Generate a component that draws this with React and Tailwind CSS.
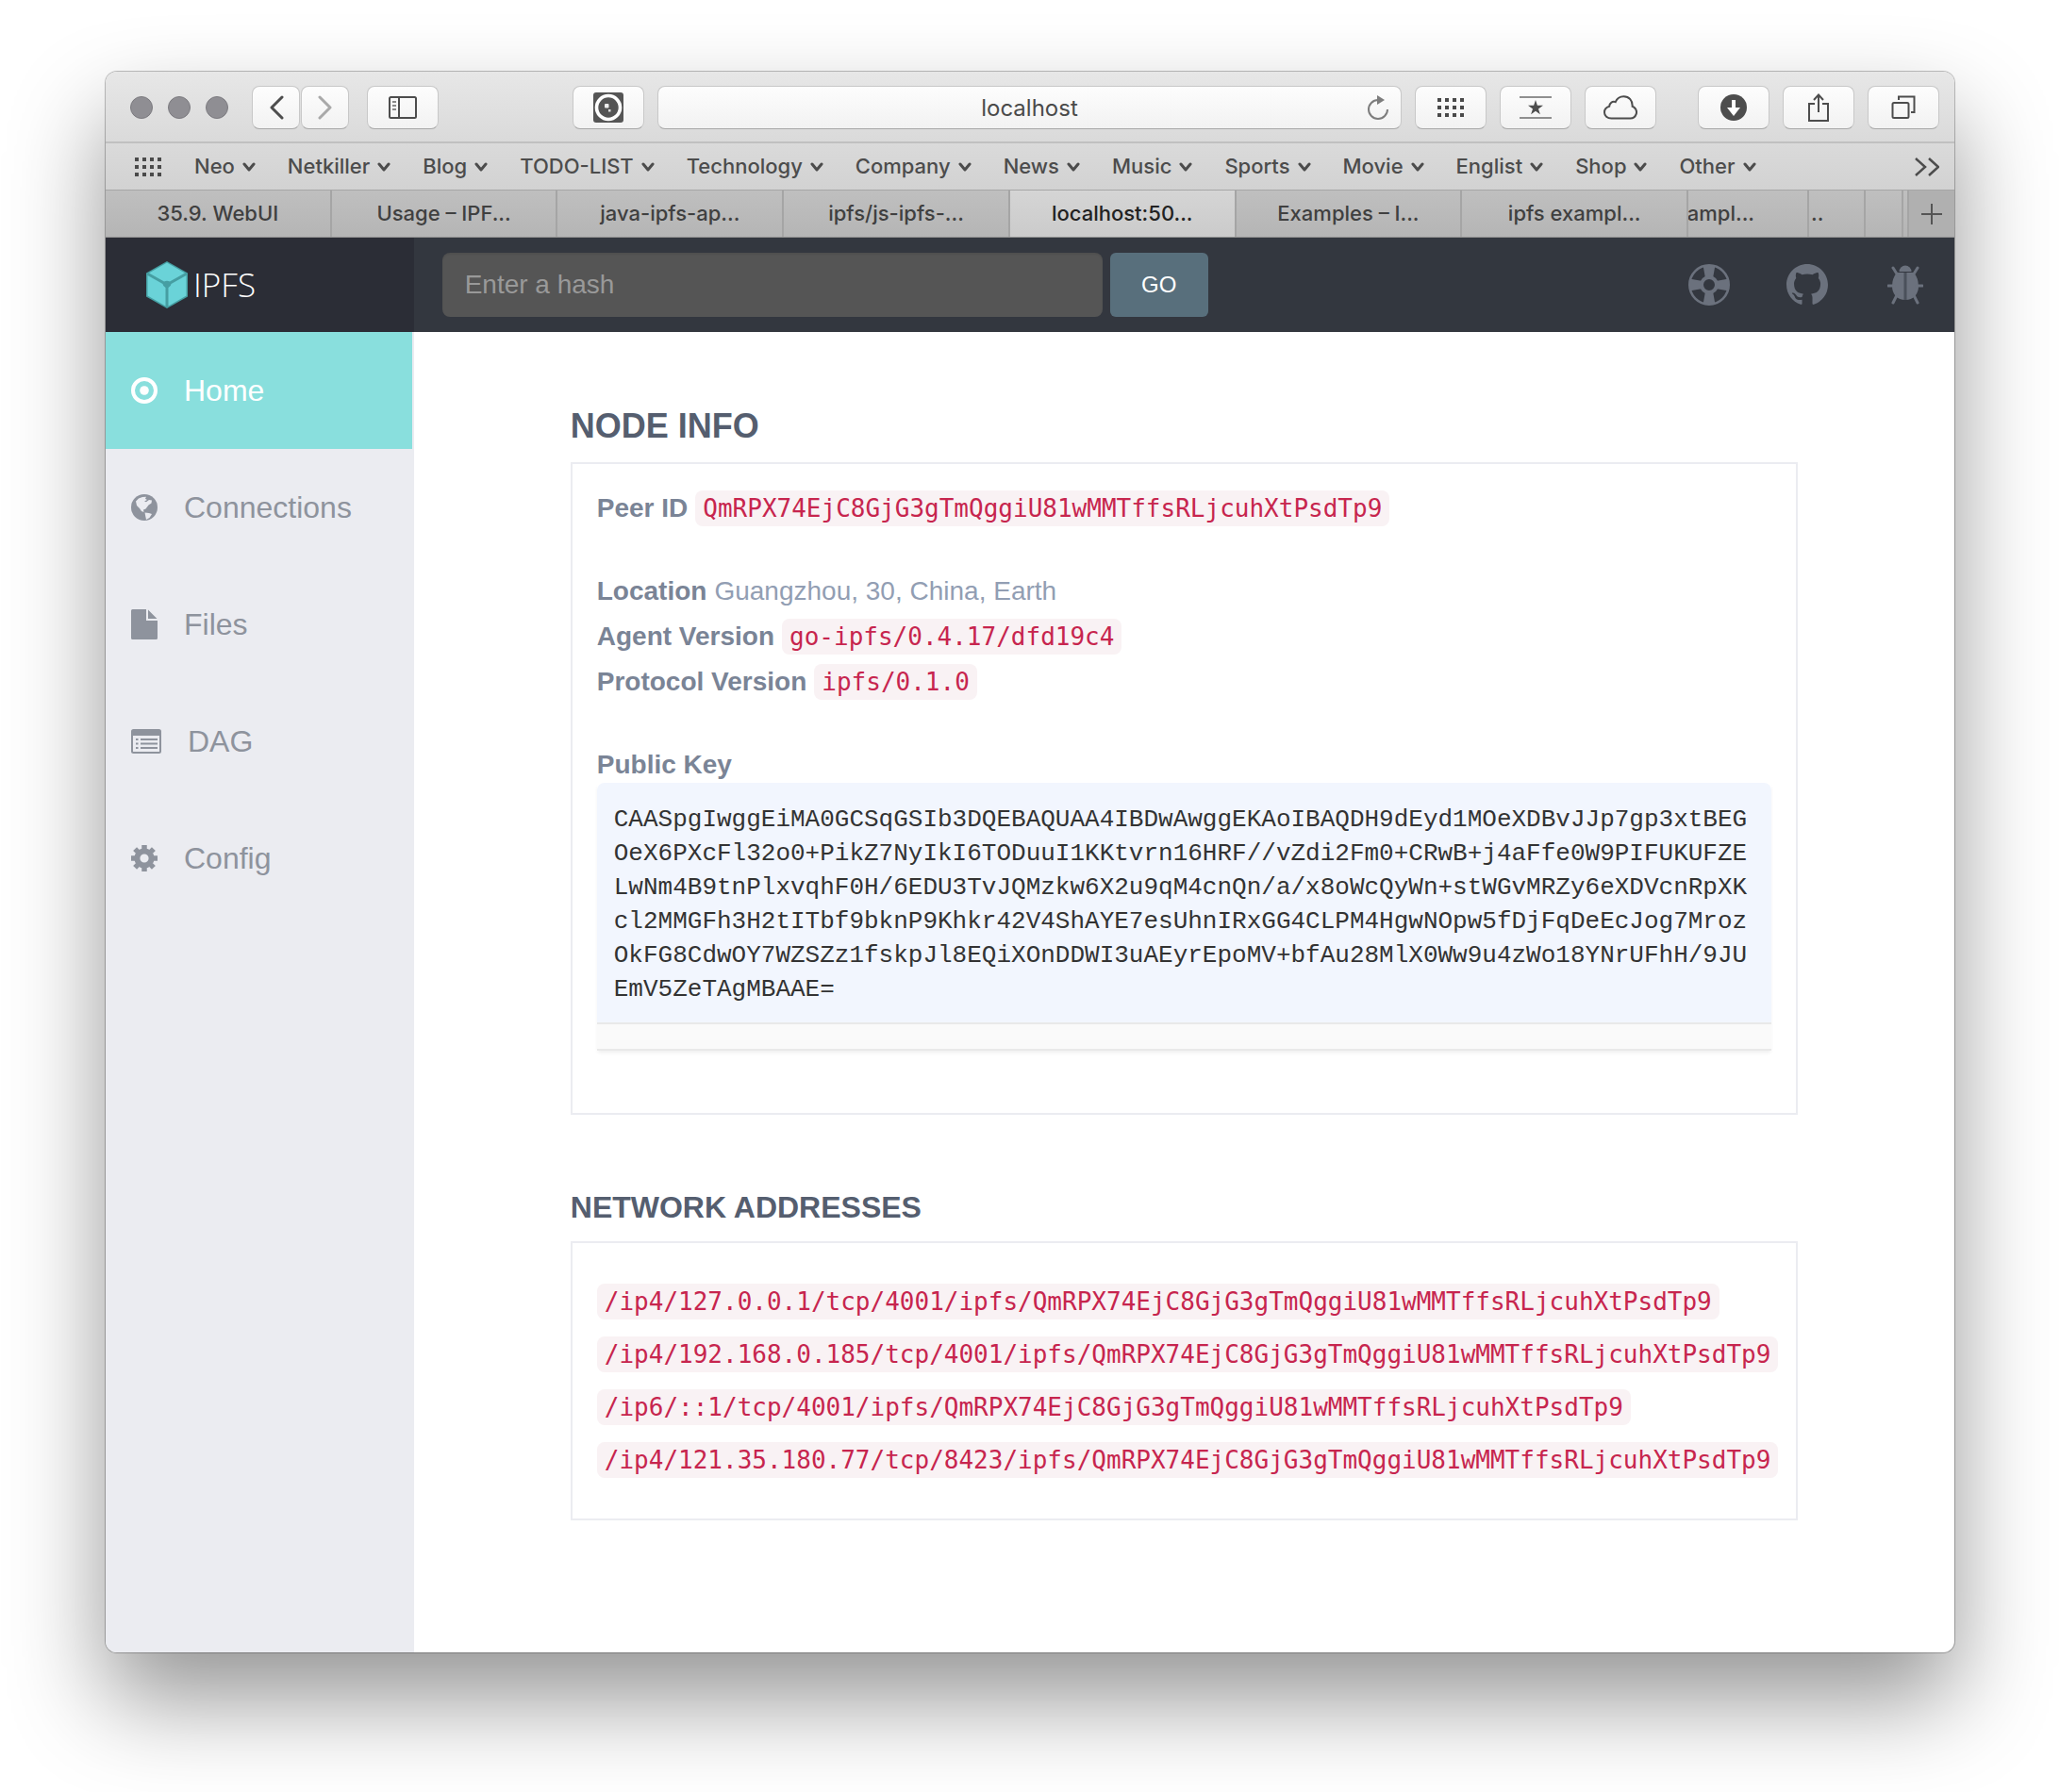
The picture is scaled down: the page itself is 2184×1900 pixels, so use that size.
import { useState } from "react";

const PEER = "QmRPX74EjC8GjG3gTmQggiU81wMMTffsRLjcuhXtPsdTp9";
const PUBLIC_KEY =
  "CAASpgIwggEiMA0GCSqGSIb3DQEBAQUAA4IBDwAwggEKAoIBAQDH9dEyd1MOeXDBvJJp7gp3xtBEGOeX6PXcFl32o0+PikZ7NyIkI6TODuuI1KKtvrn16HRF//vZdi2Fm0+CRwB+j4aFfe0W9PIFUKUFZELwNm4B9tnPlxvqhF0H/6EDU3TvJQMzkw6X2u9qM4cnQn/a/x8oWcQyWn+stWGvMRZy6eXDVcnRpXKcl2MMGFh3H2tITbf9bknP9Khkr42V4ShAYE7esUhnIRxGG4CLPM4HgwNOpw5fDjFqDeEcJog7MrozOkFG8CdwOY7WZSZz1fskpJl8EQiXOnDDWI3uAEyrEpoMV+bfAu28MlX0Ww9u4zWo18YNrUFhH/9JUEmV5ZeTAgMBAAE=";
const ADDRESSES = [
  `/ip4/127.0.0.1/tcp/4001/ipfs/${PEER}`,
  `/ip4/192.168.0.185/tcp/4001/ipfs/${PEER}`,
  `/ip6/::1/tcp/4001/ipfs/${PEER}`,
  `/ip4/121.35.180.77/tcp/8423/ipfs/${PEER}`,
];
const BOOKMARKS = ["Neo", "Netkiller", "Blog", "TODO-LIST", "Technology", "Company", "News", "Music", "Sports", "Movie", "Englist", "Shop", "Other"];
const TABS = ["35.9. WebUI", "Usage – IPF...", "java-ipfs-ap...", "ipfs/js-ipfs-...", "localhost:50...", "Examples – I...", "ipfs exampl..."];

function ToolButton({ label, className = "w-[76px]", children }) {
  return (
    <button
      type="button"
      aria-label={label}
      className={`flex h-[46px] shrink-0 items-center justify-center rounded-lg border border-[#c8c8c8] border-b-[#a8a8a8] bg-linear-to-b from-[#fdfdfd] to-[#f2f2f2] text-[#4d4d4d] ${className}`}
    >
      {children}
    </button>
  );
}

function DotGrid() {
  return (
    <svg width="28" height="20" viewBox="0 0 28 20" fill="#4a4a4a" aria-hidden="true">
      {[0, 8, 16].map((y) => [0, 8, 16, 24].map((x) => <rect key={`${x}-${y}`} x={x} y={y} width="4" height="4" />))}
    </svg>
  );
}

function Toolbar() {
  return (
    <div className="flex h-[76px] items-center border-b-2 border-[#c0c0c0] bg-linear-to-b from-[#e7e7e7] to-[#dadada] pt-0.5 pr-4 pl-[26px]">
      <div className="flex gap-4">
        {["Close", "Minimize", "Zoom"].map((name) => (
          <button key={name} type="button" aria-label={name} className="size-6 rounded-full border border-[#7c7b80] bg-[#8f8e93]" />
        ))}
      </div>
      <div className="ml-[25px] flex gap-px">
        <ToolButton label="Back" className="w-[51px]">
          <svg width="16" height="26" viewBox="0 0 16 26" fill="none" stroke="currentColor" strokeWidth="3" strokeLinecap="round" strokeLinejoin="round"><path d="M14 2 3 13l11 11" /></svg>
        </ToolButton>
        <ToolButton label="Forward" className="w-[51px]">
          <svg width="16" height="26" viewBox="0 0 16 26" fill="none" stroke="#a9a9a9" strokeWidth="3" strokeLinecap="round" strokeLinejoin="round"><path d="m2 2 11 11L2 24" /></svg>
        </ToolButton>
      </div>
      <div className="ml-[19px]">
        <ToolButton label="Show sidebar">
          <svg width="30" height="24" viewBox="0 0 30 24" fill="none" stroke="currentColor" strokeWidth="2"><rect x="1" y="1" width="28" height="22" rx="1.5" /><path d="M11 1v22" /><path d="M4 6h4M4 10h4M4 14h4" stroke="#8a8a8a" /></svg>
        </ToolButton>
      </div>
      <div className="ml-[142px] flex min-w-0 flex-1 items-center gap-3.5">
        <ToolButton label="Extension">
          <svg width="32" height="32" viewBox="0 0 32 32"><rect width="32" height="32" rx="3" fill="#555" /><circle cx="16" cy="16" r="12.500" fill="none" stroke="#fff" strokeWidth="3.600" /><rect x="12" y="12" width="4.500" height="4.500" rx="1" fill="#eee" /><rect x="16" y="18" width="2.500" height="2.500" fill="#ddd" /></svg>
        </ToolButton>
        <div className="relative flex h-[46px] min-w-0 flex-1 items-center rounded-lg border border-[#c8c8c8] border-b-[#a8a8a8] bg-linear-to-b from-[#fdfdfd] to-[#f2f2f2]">
          <input aria-label="Address" defaultValue="localhost" className="w-full min-w-0 bg-transparent pt-0.5 text-center text-2xl text-[#4a4a4a] outline-none" />
          <button type="button" aria-label="Reload" className="absolute right-3">
            <svg width="24" height="28" viewBox="0 0 24 28" fill="none" stroke="#7d7d7d" strokeWidth="2"><path d="M12 6a10 10 0 1 0 10 10" /><path d="M11 1v10l8-5z" fill="#7d7d7d" stroke="none" /></svg>
          </button>
        </div>
        <ToolButton label="Top sites"><DotGrid /></ToolButton>
        <ToolButton label="Favorites">
          <svg width="34" height="24" viewBox="0 0 34 24"><path d="M0 1h34M0 23h34" stroke="#8f8f8f" strokeWidth="2" /><path d="m17 4 1.900 5.800H25l-5 3.600 1.900 5.900-4.900-3.600-4.900 3.600 1.900-5.900-5-3.600h6.100z" fill="#4d4d4d" /></svg>
        </ToolButton>
        <ToolButton label="iCloud tabs">
          <svg width="36" height="26" viewBox="0 0 36 26" fill="none" stroke="currentColor" strokeWidth="2"><path d="M8.500 24.500h20a6.500 6.500 0 0 0 4-11.600c-.6-.6-1.300-1-1.900-1.200C31 5.500 27 1.200 21.500 1.200c-4.200 0-7.300 2.300-8.800 6-2.900-1.200-6.300.6-6.500 4.600C3.200 12.700 1 15 1 18.200c0 3.500 3 6.300 7.500 6.300z" /></svg>
        </ToolButton>
        <div className="ml-[30px] flex gap-3.5">
          <ToolButton label="Downloads">
            <svg width="28" height="28" viewBox="0 0 28 28"><circle cx="14" cy="14" r="14" fill="#4d4d4d" /><path d="M12 6h4v8h5l-7 9-7-9h5z" fill="#fff" /></svg>
          </ToolButton>
          <ToolButton label="Share">
            <svg width="24" height="32" viewBox="0 0 24 32" fill="none" stroke="currentColor" strokeWidth="2"><path d="M8 12H2v18h20V12h-6M12 21V3M7 8l5-5.500L17 8" /></svg>
          </ToolButton>
          <ToolButton label="Tab overview">
            <svg width="26" height="26" viewBox="0 0 26 26" fill="none" stroke="currentColor" strokeWidth="2"><rect x="1.500" y="8" width="17" height="16" rx="1.500" /><path d="M8 5V1.500h16.500V18H21" /></svg>
          </ToolButton>
        </div>
      </div>
    </div>
  );
}

function Bookmarks() {
  return (
    <nav aria-label="Bookmarks" className="flex h-[50px] items-center border-b border-[#a6a6a6] bg-linear-to-b from-[#dadada] to-[#d2d2d2] pr-4 pl-[31px] text-[22px] font-medium text-[#4c4c4c]">
      <button type="button" aria-label="Show all favorites" className="mr-[35px]"><DotGrid /></button>
      <div className="flex min-w-0 flex-1 gap-[34px] overflow-hidden">
        {BOOKMARKS.map((name) => (
          <button key={name} type="button" className="flex shrink-0 items-center gap-2">
            {name}
            <svg width="14" height="10" viewBox="0 0 14 10" fill="none" stroke="currentColor" strokeWidth="3" strokeLinecap="round" strokeLinejoin="round" aria-hidden="true"><path d="m2 2 5 6 5-6" /></svg>
          </button>
        ))}
      </div>
      <button type="button" aria-label="More bookmarks">
        <svg width="26" height="20" viewBox="0 0 26 20" fill="none" stroke="currentColor" strokeWidth="2.500"><path d="m1 1 10 9-10 9M15 1l10 9-10 9" /></svg>
      </button>
    </nav>
  );
}

function Tabs() {
  return (
    <div className="flex h-[50px] border-b border-[#8f8f8f] bg-linear-to-b from-[#bfbfbf] to-[#b5b5b5] text-[22px] font-medium text-[#404040]">
      {TABS.map((name) => {
        const active = name.startsWith("localhost");
        return (
          <button
            key={name}
            type="button"
            className={`min-w-0 flex-1 truncate border-r-2 border-[#a5a5a5] ${active ? "bg-linear-to-b from-[#d5d5d5] to-[#cbcbcb] text-[#222]" : ""}`}
          >
            {name}
          </button>
        );
      })}
      <button type="button" className="flex w-32 items-center justify-end overflow-hidden border-r-2 border-[#a5a5a5] pr-[56px]">xampl...</button>
      <button type="button" className="flex w-[60px] items-center overflow-hidden border-r-2 border-[#a5a5a5] pl-0.5">..</button>
      <span className="w-10 border-r-2 border-[#a5a5a5]" />
      <span className="w-1.5 border-r-2 border-[#a5a5a5]" />
      <button type="button" aria-label="New tab" className="flex w-12 items-center justify-center bg-[#b0b0b0]">
        <svg width="22" height="22" viewBox="0 0 22 22" stroke="#555" strokeWidth="2"><path d="M11 0v22M0 11h22" /></svg>
      </button>
    </div>
  );
}

function Logo() {
  return (
    <svg width="44" height="50" viewBox="0 0 44 50" aria-hidden="true">
      <path d="M22 0 44 12.500v25L22 50 0 37.500v-25z" fill="#469ea2" />
      <path d="M22 1.500 41 12.500 25 21.500q-3-1.500-6 0L3 12.500z" fill="#6ad3d8" />
      <path d="M1.500 15 17.500 24q.3 2.600 3 4v19.500L1.500 36.500zM42.500 15l-16 9q-.3 2.600-3 4v19.500l19-11z" fill="#6ad3d8" />
    </svg>
  );
}

function LifeRing() {
  return (
    <svg width="44" height="44" viewBox="0 0 44 44" fill="none" stroke="currentColor" aria-hidden="true">
      <circle cx="22" cy="22" r="20.700" strokeWidth="2.600" />
      <circle cx="22" cy="22" r="8" strokeWidth="4" />
      <path d="M15.500 1h13l-2.500 14h-8zM15.500 43h13L26 29h-8zM1 15.500v13L15 26v-8zM43 15.500v13L29 26v-8z" fill="currentColor" stroke="none" />
    </svg>
  );
}

function GithubMark() {
  return (
    <svg width="44" height="44" viewBox="0 0 16 16" fill="currentColor" aria-hidden="true">
      <path d="M8 0C3.58 0 0 3.58 0 8c0 3.54 2.29 6.53 5.47 7.59.4.07.55-.17.55-.38 0-.19-.01-.82-.01-1.49-2.01.37-2.53-.49-2.69-.94-.09-.23-.48-.94-.82-1.13-.28-.15-.68-.52-.01-.53.63-.01 1.08.58 1.23.82.72 1.21 1.87.87 2.33.66.07-.52.28-.87.51-1.07-1.78-.2-3.64-.89-3.64-3.95 0-.87.31-1.59.82-2.15-.08-.2-.36-1.02.08-2.12 0 0 .67-.21 2.2.82.64-.18 1.32-.27 2-.27.68 0 1.36.09 2 .27 1.53-1.04 2.2-.82 2.2-.82.44 1.1.16 1.92.08 2.12.51.56.82 1.27.82 2.15 0 3.07-1.87 3.75-3.65 3.95.29.25.54.73.54 1.48 0 1.07-.01 1.93-.01 2.2 0 .21.15.46.55.38A8.01 8.01 0 0 0 16 8c0-4.42-3.58-8-8-8z" />
    </svg>
  );
}

function Bug() {
  return (
    <svg width="38" height="42" viewBox="0 0 38 42" aria-hidden="true">
      <path d="M12.500 7a6.500 6.500 0 0 1 13 0z" fill="currentColor" />
      <path d="M10 8h18q5 6 5 14.500C33 31 27.500 37 19 37S5 31 5 22.500Q5 14 10 8z" fill="currentColor" />
      <path d="M11 11 6 3M27 11l5-8M1 22h6M31 22h6M10 32l-4 8M28 32l4 8" fill="none" stroke="currentColor" strokeWidth="3" strokeLinecap="round" />
      <path d="M19 8v29" stroke="#4b515b" strokeWidth="3" />
    </svg>
  );
}

function Header() {
  return (
    <header className="flex min-h-[100px] bg-[#33373f] font-['Liberation_Sans',Arial,sans-serif]">
      <a href="#home" className="flex w-1/6 items-center gap-1.5 bg-[#2b2d36] pl-[43px] font-['Open_Sans',sans-serif] text-[35px] font-light text-white">
        <Logo />
        <span>IPFS</span>
      </a>
      <form className="flex min-w-0 flex-1 items-center gap-2 pl-[30px]" onSubmit={(e) => e.preventDefault()}>
        <input aria-label="Hash" placeholder="Enter a hash" className="h-[68px] w-[700px] min-w-0 rounded-lg bg-[#555] px-6 text-[28px] text-white shadow-[inset_0_2px_2px_rgba(0,0,0,0.08)] outline-none placeholder:text-[#999]" />
        <button type="submit" className="h-[68px] w-[104px] shrink-0 rounded-md bg-[#586f7c] text-2xl text-white">GO</button>
      </form>
      <nav aria-label="Project links" className="flex items-center gap-[60px] pr-[30px] text-[#6b717d]">
        <a href="#help" aria-label="Help" className="flex w-11 justify-center"><LifeRing /></a>
        <a href="#github" aria-label="GitHub" className="flex w-11 justify-center"><GithubMark /></a>
        <a href="#bugs" aria-label="Report a bug" className="flex w-11 justify-center"><Bug /></a>
      </nav>
    </header>
  );
}

const NAV = [
  {
    name: "Home",
    icon: (
      <svg width="28" height="28" viewBox="0 0 28 28"><circle cx="14" cy="14" r="12" fill="none" stroke="currentColor" strokeWidth="4" /><circle cx="14" cy="14" r="4.800" fill="currentColor" /></svg>
    ),
  },
  {
    name: "Connections",
    icon: (
      <svg width="28" height="28" viewBox="0 0 28 28"><circle cx="14" cy="14" r="14" fill="currentColor" /><path d="M5 7.500 8 4.500l4-1.500 4-.3-1 2 2 1.300-3 1.500 2 .7 3-2.200 3 .5-.5 3-3 2-3 4-2.500 1 .5 2.500L11 18l-2-3-3-3z" fill="#ebecf1" /><path d="m14.500 19.500 4.500.5 3 1-2.500 4-3.500 2z" fill="#ebecf1" /></svg>
    ),
  },
  {
    name: "Files",
    icon: (
      <svg width="28" height="32" viewBox="0 0 28 32" fill="currentColor"><path d="M1.500 0H16v12h12v18.500a1.500 1.500 0 0 1-1.500 1.500h-25A1.500 1.500 0 0 1 0 30.500v-29A1.500 1.500 0 0 1 1.500 0zM18 .5 27.500 10H18z" /></svg>
    ),
  },
  {
    name: "DAG",
    icon: (
      <svg width="32" height="26" viewBox="0 0 32 26" fill="none" stroke="currentColor"><rect x="1" y="1" width="30" height="24" rx="1.500" strokeWidth="2" /><path d="M1 4h30" strokeWidth="6" /><path d="M5 11h2.500M10 11h18M5 15.500h2.500M10 15.500h18M5 20h2.500M10 20h18" strokeWidth="2" /></svg>
    ),
  },
  {
    name: "Config",
    icon: (
      <svg width="28" height="28" viewBox="0 0 28 28" fill="none" stroke="currentColor"><circle cx="14" cy="14" r="7.600" strokeWidth="6" /><path d="M14 0v4M14 24v4M0 14h4M24 14h4M4.100 4.100l3 3M20.900 20.900l3 3M4.100 23.900l3-3M20.900 7.100l3-3" strokeWidth="5.500" /></svg>
    ),
  },
];

function Sidebar({ current, onSelect }) {
  return (
    <nav aria-label="Main" className="w-1/6 bg-[#ebecf1] pr-0.5">
      {NAV.map(({ name, icon }) => (
        <a
          key={name}
          href={`#${name.toLowerCase()}`}
          onClick={() => onSelect(name)}
          className={`flex h-[124px] items-center gap-7 pl-[27px] text-[32px] ${current === name ? "bg-[#89dfdd] text-white" : "text-[#8e939d]"}`}
        >
          {icon}
          <span>{name}</span>
        </a>
      ))}
    </nav>
  );
}

function Code({ children }) {
  return <code className="rounded-lg bg-[#f9f2f4] px-2 py-1 font-['DejaVu_Sans_Mono',monospace] text-[26px] leading-[30px] text-[#c7254e]">{children}</code>;
}

function Row({ label, children }) {
  return (
    <p className="flex h-12 items-center gap-2 whitespace-nowrap">
      <strong className="text-[#7a8496]">{label}</strong>
      {children}
    </p>
  );
}

function Main() {
  return (
    <main className="min-w-0 flex-1 text-[28px] text-[#929eb3]">
      <div className="mx-auto w-5/6 px-[30px] pt-20 pb-20">
        <h1 className="text-4xl font-bold text-[#555e6f]">NODE INFO</h1>
        <section className="mt-[18px] border-2 border-[#ebecf1] px-[26px] pt-[23px] pb-[66px]">
          <Row label="Peer ID"><Code>{PEER}</Code></Row>
          <div className="mt-10">
            <Row label="Location"><span>Guangzhou, 30, China, Earth</span></Row>
            <Row label="Agent Version"><Code>go-ipfs/0.4.17/dfd19c4</Code></Row>
            <Row label="Protocol Version"><Code>ipfs/0.1.0</Code></Row>
          </div>
          <div className="mt-10">
            <Row label="Public Key" />
            <div className="-mt-[5px] shadow-[0_3px_4px_-1px_rgba(0,0,0,0.07)]">
              <pre className="rounded-t-lg bg-[#f2f6fe] px-[18px] pt-[21px] pb-[17px] font-['Liberation_Mono',monospace] text-[26px] leading-9 break-all whitespace-pre-wrap text-[#333]">{PUBLIC_KEY}</pre>
              <div className="h-[30px] border-y-2 border-[#e9e9e9] bg-[#fafafa]" />
            </div>
          </div>
        </section>
        <h2 className="mt-[74px] text-[32px] leading-[48px] font-bold text-[#555e6f]">NETWORK ADDRESSES</h2>
        <section className="mt-3 border-2 border-[#ebecf1] px-[26px] py-[34px]">
          <ul>
            {ADDRESSES.map((address) => (
              <li key={address} className="flex h-14 items-center whitespace-nowrap"><Code>{address}</Code></li>
            ))}
          </ul>
        </section>
      </div>
    </main>
  );
}

export default function App() {
  const [current, setCurrent] = useState("Home");
  return (
    <div className="flex min-h-screen flex-col bg-white px-28 pt-[76px] pb-[148px] font-['Inter',sans-serif]">
      <div className="flex flex-1 flex-col overflow-hidden rounded-xl bg-white shadow-[0_0_0_1px_rgba(0,0,0,0.25),0_50px_100px_rgba(0,0,0,0.42)]">
        <Toolbar />
        <Bookmarks />
        <Tabs />
        <Header />
        <div className="flex flex-1 font-['Liberation_Sans',Arial,sans-serif]">
          <Sidebar current={current} onSelect={setCurrent} />
          <Main />
        </div>
      </div>
    </div>
  );
}
